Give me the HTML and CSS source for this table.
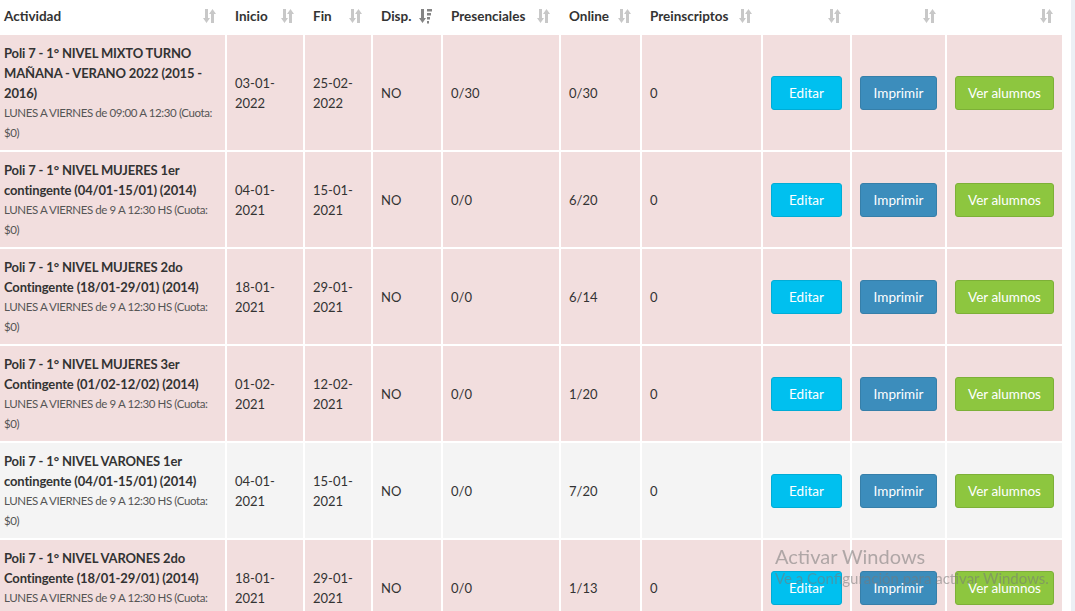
FILE: index.html
```html
<!DOCTYPE html>
<html lang="es">
<head>
    <meta charset="UTF-8">
    <meta name="viewport" content="width=device-width, initial-scale=1.0">
    <title>Actividades</title>
    <link rel="stylesheet" href="styles.css">
</head>
<body>
    <div class="box">
        <table class="tabla">
            <colgroup>
                <col style="width: 226px">
                <col style="width: 78px">
                <col style="width: 68px">
                <col style="width: 70px">
                <col style="width: 118px">
                <col style="width: 81px">
                <col style="width: 121px">
                <col style="width: 89px">
                <col style="width: 95px">
                <col style="width: 117px">
            </colgroup>
            <thead>
                <tr>
                    <th><div class="th-in"><span>Actividad</span><svg class="sort" viewBox="0 0 13 16"><path d="M2 1h3v9h2l-3.5 5L0 10h2z"/><path d="M8 15h3V6h2L9.5 1 6 6h2z"/></svg></div></th>
                    <th><div class="th-in"><span>Inicio</span><svg class="sort" viewBox="0 0 13 16"><path d="M2 1h3v9h2l-3.5 5L0 10h2z"/><path d="M8 15h3V6h2L9.5 1 6 6h2z"/></svg></div></th>
                    <th><div class="th-in"><span>Fin</span><svg class="sort" viewBox="0 0 13 16"><path d="M2 1h3v9h2l-3.5 5L0 10h2z"/><path d="M8 15h3V6h2L9.5 1 6 6h2z"/></svg></div></th>
                    <th><div class="th-in"><span>Disp.</span><svg class="sort activo" viewBox="0 0 13 16"><path d="M2 1h3v9h2l-3.5 5L0 10h2z"/><path d="M8 1h5v2.5H8zM8 5h4v2.5H8zM8 9h3v2.5H8zM8 13h2v2.5H8z"/></svg></div></th>
                    <th><div class="th-in"><span>Presenciales</span><svg class="sort" viewBox="0 0 13 16"><path d="M2 1h3v9h2l-3.5 5L0 10h2z"/><path d="M8 15h3V6h2L9.5 1 6 6h2z"/></svg></div></th>
                    <th><div class="th-in"><span>Online</span><svg class="sort" viewBox="0 0 13 16"><path d="M2 1h3v9h2l-3.5 5L0 10h2z"/><path d="M8 15h3V6h2L9.5 1 6 6h2z"/></svg></div></th>
                    <th><div class="th-in"><span>Preinscriptos</span><svg class="sort" viewBox="0 0 13 16"><path d="M2 1h3v9h2l-3.5 5L0 10h2z"/><path d="M8 15h3V6h2L9.5 1 6 6h2z"/></svg></div></th>
                    <th><div class="th-in"><span></span><svg class="sort" viewBox="0 0 13 16"><path d="M2 1h3v9h2l-3.5 5L0 10h2z"/><path d="M8 15h3V6h2L9.5 1 6 6h2z"/></svg></div></th>
                    <th><div class="th-in"><span></span><svg class="sort" viewBox="0 0 13 16"><path d="M2 1h3v9h2l-3.5 5L0 10h2z"/><path d="M8 15h3V6h2L9.5 1 6 6h2z"/></svg></div></th>
                    <th><div class="th-in"><span></span><svg class="sort" viewBox="0 0 13 16"><path d="M2 1h3v9h2l-3.5 5L0 10h2z"/><path d="M8 15h3V6h2L9.5 1 6 6h2z"/></svg></div></th>
                </tr>
            </thead>
            <tbody>
                <tr class="danger">
                    <td><b>Poli 7 - 1° NIVEL MIXTO TURNO MAÑANA - VERANO 2022 (2015 - 2016)</b><small>LUNES A VIERNES de 09:00 A 12:30 (Cuota: $0)</small></td>
                    <td>03-01-2022</td>
                    <td>25-02-2022</td>
                    <td>NO</td>
                    <td>0/30</td>
                    <td>0/30</td>
                    <td>0</td>
                    <td><button class="btn btn-info">Editar</button></td>
                    <td><button class="btn btn-primary">Imprimir</button></td>
                    <td><button class="btn btn-success">Ver alumnos</button></td>
                </tr>
                <tr class="danger">
                    <td><b>Poli 7 - 1° NIVEL MUJERES 1er contingente (04/01-15/01) (2014)</b><small>LUNES A VIERNES de 9 A 12:30 HS (Cuota: $0)</small></td>
                    <td>04-01-2021</td>
                    <td>15-01-2021</td>
                    <td>NO</td>
                    <td>0/0</td>
                    <td>6/20</td>
                    <td>0</td>
                    <td><button class="btn btn-info">Editar</button></td>
                    <td><button class="btn btn-primary">Imprimir</button></td>
                    <td><button class="btn btn-success">Ver alumnos</button></td>
                </tr>
                <tr class="danger">
                    <td><b>Poli 7 - 1° NIVEL MUJERES 2do Contingente (18/01-29/01) (2014)</b><small>LUNES A VIERNES de 9 A 12:30 HS (Cuota: $0)</small></td>
                    <td>18-01-2021</td>
                    <td>29-01-2021</td>
                    <td>NO</td>
                    <td>0/0</td>
                    <td>6/14</td>
                    <td>0</td>
                    <td><button class="btn btn-info">Editar</button></td>
                    <td><button class="btn btn-primary">Imprimir</button></td>
                    <td><button class="btn btn-success">Ver alumnos</button></td>
                </tr>
                <tr class="danger">
                    <td><b>Poli 7 - 1° NIVEL MUJERES 3er Contingente (01/02-12/02) (2014)</b><small>LUNES A VIERNES de 9 A 12:30 HS (Cuota: $0)</small></td>
                    <td>01-02-2021</td>
                    <td>12-02-2021</td>
                    <td>NO</td>
                    <td>0/0</td>
                    <td>1/20</td>
                    <td>0</td>
                    <td><button class="btn btn-info">Editar</button></td>
                    <td><button class="btn btn-primary">Imprimir</button></td>
                    <td><button class="btn btn-success">Ver alumnos</button></td>
                </tr>
                <tr class="normal">
                    <td><b>Poli 7 - 1° NIVEL VARONES 1er contingente (04/01-15/01) (2014)</b><small>LUNES A VIERNES de 9 A 12:30 HS (Cuota: $0)</small></td>
                    <td>04-01-2021</td>
                    <td>15-01-2021</td>
                    <td>NO</td>
                    <td>0/0</td>
                    <td>7/20</td>
                    <td>0</td>
                    <td><button class="btn btn-info">Editar</button></td>
                    <td><button class="btn btn-primary">Imprimir</button></td>
                    <td><button class="btn btn-success">Ver alumnos</button></td>
                </tr>
                <tr class="danger">
                    <td><b>Poli 7 - 1° NIVEL VARONES 2do Contingente (18/01-29/01) (2014)</b><small>LUNES A VIERNES de 9 A 12:30 HS (Cuota: $0)</small></td>
                    <td>18-01-2021</td>
                    <td>29-01-2021</td>
                    <td>NO</td>
                    <td>0/0</td>
                    <td>1/13</td>
                    <td>0</td>
                    <td><button class="btn btn-info">Editar</button></td>
                    <td><button class="btn btn-primary">Imprimir</button></td>
                    <td><button class="btn btn-success">Ver alumnos</button></td>
                </tr>
            </tbody>
        </table>
    </div>
    <div class="activar">
        <div class="activar-titulo">Activar Windows</div>
        <div class="activar-texto">Ve a Configuración para activar Windows.</div>
    </div>
</body>
</html>
```

FILE: styles.css
```css
body {
    font-family: Lato, "Open Sans", sans-serif;
    font-size: 13px;
    color: #333;
    background-color: #ecf0f5;
    margin: 0;
    padding: 0;
    height: 611px;
    overflow: hidden;
}

.box {
    width: 1071px;
    height: 100%;
    background-color: #fff;
}

.tabla {
    table-layout: fixed;
    border-collapse: collapse;
    width: 1063px;
}

.tabla th,
.tabla td {
    border-right: 2px solid #fff;
    border-bottom: 2px solid #fff;
    text-align: left;
    vertical-align: middle;
    line-height: 20px;
}

.tabla th {
    padding: 6px 9px 7px 8px;
    font-size: 13.5px;
    font-weight: bold;
    background-color: #fff;
}

.tabla td {
    padding: 8px 8px 7px 8px;
}

.tabla th:first-child,
.tabla td:first-child {
    padding-left: 4px;
}

.th-in {
    display: flex;
    align-items: center;
    justify-content: space-between;
    gap: 4px;
}

.sort {
    width: 13px;
    height: 16px;
    fill: #c8c8c8;
    flex-shrink: 0;
}

.sort.activo {
    fill: #858585;
}

.tabla td b {
    display: block;
    font-weight: bold;
    letter-spacing: -0.15px;
}

.tabla td small {
    display: block;
    font-size: 11.5px;
    letter-spacing: -0.4px;
    color: #555;
}

tr.danger td {
    background-color: #f2dede;
}

tr.normal td {
    background-color: #f4f4f4;
}

.btn {
    font-family: inherit;
    font-size: 13.5px;
    line-height: 20px;
    color: #fff;
    padding: 6px 0;
    text-align: center;
    white-space: nowrap;
    border: 1px solid transparent;
    border-radius: 3px;
    cursor: pointer;
}

.btn-info {
    width: 71px;
    background-color: #00c0ef;
    border-color: #00acd6;
}

.btn-primary {
    width: 77px;
    background-color: #3c8dbc;
    border-color: #367fa9;
}

.btn-success {
    width: 99px;
    background-color: #8dc63f;
    border-color: #7db037;
}

.activar {
    position: fixed;
    left: 775px;
    top: 544px;
    color: rgba(120, 120, 120, 0.55);
    pointer-events: none;
}

.activar-titulo {
    font-size: 20px;
    line-height: 24px;
}

.activar-texto {
    font-size: 15px;
    line-height: 20px;
}
```
